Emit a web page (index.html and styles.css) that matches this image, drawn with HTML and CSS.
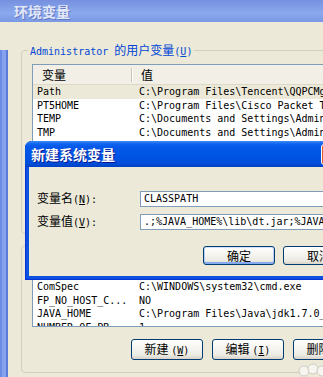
FILE: index.html
```html
<!DOCTYPE html>
<html>
   <head>
      <meta http-equiv="Content-Type" content="text/html;charset=utf-8" />
      <link rel="stylesheet" href="styles.css">
   </head>
   <body>
      <div class="win">
         <div class="wtitle">环境变量</div>
         <div class="wbody">
            <div class="group user">
               <div class="legend"><span class="m">Administrator </span>的用户变量<span class="m">(<u>U</u>)</span></div>
               <div class="list">
                  <div class="head"><div class="hc c1">变量</div><div class="hc c2">值</div></div>
                  <div class="row sel"><span class="k">Path</span><span class="v">C:\Program Files\Tencent\QQPCMgr\6.6.2266.401</span></div>
                  <div class="row"><span class="k">PT5HOME</span><span class="v">C:\Program Files\Cisco Packet Tracer 5.3.3</span></div>
                  <div class="row"><span class="k">TEMP</span><span class="v">C:\Documents and Settings\Administrator\Local Settings\Temp</span></div>
                  <div class="row"><span class="k">TMP</span><span class="v">C:\Documents and Settings\Administrator\Local Settings\Temp</span></div>
               </div>
               <div class="btns">
                  <button class="btn">新建 <span class="m">(<u>N</u>)</span></button>
                  <button class="btn">编辑 <span class="m">(<u>E</u>)</span></button>
                  <button class="btn">删除 <span class="m">(<u>D</u>)</span></button>
               </div>
            </div>
            <div class="group sys">
               <div class="legend">系统变量<span class="m">(<u>S</u>)</span></div>
               <div class="list">
                  <div class="head"><div class="hc c1">变量</div><div class="hc c2">值</div></div>
                  <div class="row"><span class="k">ComSpec</span><span class="v">C:\WINDOWS\system32\cmd.exe</span></div>
                  <div class="row"><span class="k">FP_NO_HOST_C...</span><span class="v">NO</span></div>
                  <div class="row"><span class="k">JAVA_HOME</span><span class="v">C:\Program Files\Java\jdk1.7.0_25</span></div>
                  <div class="row"><span class="k">NUMBER_OF_PR...</span><span class="v">1</span></div>
                  <div class="row"><span class="k">OS</span><span class="v">Windows_NT</span></div>
               </div>
               <div class="btns">
                  <button class="btn">新建 <span class="m">(<u>W</u>)</span></button>
                  <button class="btn">编辑 <span class="m">(<u>I</u>)</span></button>
                  <button class="btn">删除 <span class="m">(<u>L</u>)</span></button>
               </div>
            </div>
         </div>

         <div class="dlg">
            <div class="dtitle"><span>新建系统变量</span><span class="dclose"></span></div>
            <div class="dbody">
               <div class="frow">
                  <span class="flabel">变量名<span class="m">(<u>N</u>):</span></span>
                  <div class="field">CLASSPATH</div>
               </div>
               <div class="frow">
                  <span class="flabel">变量值<span class="m">(<u>V</u>):</span></span>
                  <div class="field">.;%JAVA_HOME%\lib\dt.jar;%JAVA_HOME%\lib\tools.jar</div>
               </div>
               <div class="dbtns">
                  <button class="btn def">确定</button>
                  <button class="btn">取消</button>
               </div>
            </div>
         </div>

         <svg class="mark" width="30" height="20" viewBox="0 0 30 20">
            <circle cx="6" cy="13" r="5" fill="#f6f5f0" stroke="#cfcdc2" />
            <circle cx="15" cy="11" r="5" fill="#f6f5f0" stroke="#cfcdc2" />
            <circle cx="24" cy="13" r="5" fill="#f6f5f0" stroke="#cfcdc2" />
         </svg>
      </div>
   </body>
</html>
```

FILE: styles.css
```css
html, body {margin: 0; overflow: hidden;}
body {font: 12px "Noto Sans CJK SC", sans-serif; color: #000; background: #ece9d8;}
.m {font-family: "DejaVu Sans Mono", monospace; font-size: 10px;}

.win {position: relative; width: 440px; height: 400px; background: #ece9d8;}
.wtitle {height: 22px; line-height: 22px; padding-left: 14px; font-size: 14px; font-weight: bold; color: #e2e8f8; text-shadow: 1px 1px 0 #6479c4; background: linear-gradient(#7690df, #86a3ea 45%, #8aa9ee 60%, #7a98e4);}
.wbody {height: 378px; padding-left: 8px; background: linear-gradient(to right, #6a8ce6 0, #6a8ce6 2px, #86a2ec 2px, #86a2ec 6px, #5b7ad9 6px, #5b7ad9 8px, #ece9d8 8px);}

.group {width: 500px; margin-left: 13px; padding-bottom: 12px; border: 1px solid #d0d0bf; border-radius: 4px;}
.user {margin-top: 28px;}
.sys {margin-top: 11px;}
.legend {width: fit-content; height: 14px; line-height: 14px; margin: -8px 0 0 6px; padding: 0 2px; background: #ece9d8; color: #0046d5; white-space: nowrap;}

.list {margin: 7px 0 0 10px; border: 1px solid #7f9db9; background: #fff; overflow: hidden;}
.user .list {height: 122px;}
.sys .list {height: 66px;}
.head {display: flex; align-items: center; height: 20px; box-sizing: border-box; background: #f1efe6; border-bottom: 1px solid #dcd9c9;}
.hc {line-height: 14px;}
.c1 {width: 89px; padding-left: 9px; border-right: 1px solid #c7c5b2; box-shadow: 1px 0 0 #fff;}
.c2 {padding-left: 9px;}
.row {display: flex; height: 13.5px; line-height: 13.5px; font-family: "DejaVu Sans Mono", monospace; font-size: 10px; white-space: nowrap;}
.k {width: 96px; padding-left: 4px; overflow: hidden; flex: none;}
.v {padding-left: 6px;}
.sel {background: #ece9d8;}

.btns {display: flex; gap: 9px; margin-top: 12px; padding-left: 109px;}
.btn {width: 72px; height: 21px; box-sizing: border-box; padding: 0; border: 1px solid #003c74; border-radius: 3px; background: linear-gradient(#fff, #f5f4ef 45%, #ebeae3 80%, #d8d3c8); font: 12px "Noto Sans CJK SC", sans-serif; line-height: 14px; color: #000; white-space: nowrap; flex: none;}
.def {box-shadow: inset 0 1px 0 #cee0fb, inset 0 -2px 0 #86aaee, inset 1px 0 0 #b8d0f6, inset -1px 0 0 #b8d0f6;}

.dlg {position: absolute; left: 25px; top: 141px; width: 319px; height: 139px; box-sizing: border-box; padding: 0 4px 4px; display: flex; flex-direction: column; background: #0a52de; border-radius: 7px 7px 0 0; box-shadow: inset 1px 0 0 #0831d9, inset 0 -1px 0 #0831d9;}
.dtitle {display: flex; align-items: center; height: 26px; margin: 0 -4px; padding: 0 2px 0 6px; flex: none; border-radius: 7px 7px 0 0; background: linear-gradient(#3b8cf8 0, #0e63ee 3px, #0558e8 6px, #0055e5 14px, #004fdb 22px, #0042c6 26px); color: #fff; font-size: 14px; font-weight: bold; text-shadow: 1px 1px 0 #0a1890;}
.dclose {width: 21px; height: 21px; box-sizing: border-box; margin-left: auto; border: 1px solid #fff; border-radius: 3px; background: #e0582e;}
.dbody {flex: 1; padding: 24px 0 0 8px; background: #ece9d8;}
.frow {display: flex; align-items: center; height: 16px;}
.frow + .frow {margin-top: 7px;}
.flabel {width: 103px; line-height: 14px; flex: none; white-space: nowrap;}
.field {flex: 1; min-width: 0; height: 16px; box-sizing: border-box; padding: 0 3px; border: 1px solid #7f9db9; background: #fff; font-family: "DejaVu Sans Mono", monospace; font-size: 10px; line-height: 14px; white-space: nowrap; overflow: hidden;}
.dbtns {display: flex; gap: 8px; margin-top: 16px; padding-left: 166px;}
.dbtns .btn {height: 19px;}

.mark {position: absolute; left: 298px; top: 358px;}
```
